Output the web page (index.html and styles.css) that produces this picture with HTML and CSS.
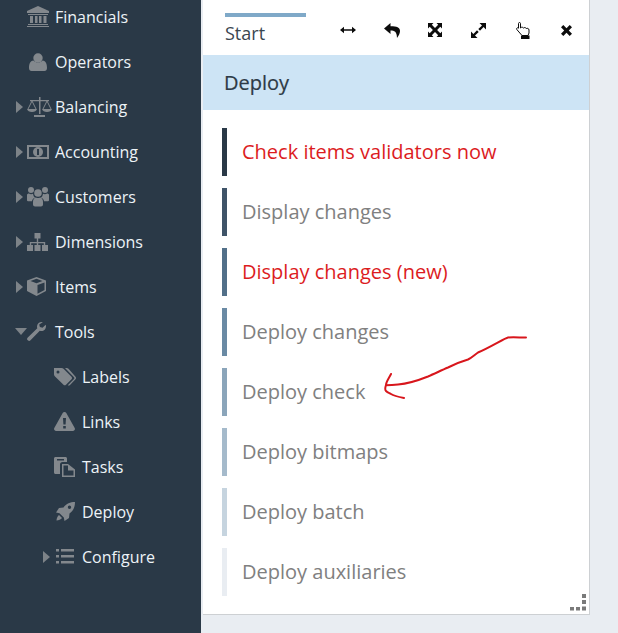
FILE: index.html
```html
<!DOCTYPE html>
<html lang="en">
<head>
<meta charset="utf-8">
<title>Deploy</title>
<link rel="stylesheet" href="styles.css">
</head>
<body>
<div class="app">
  <nav class="sidebar">
    <div class="row"><span class="caret"></span><span class="icon"><svg width="22" height="21" viewBox="0 0 22 21"><path d="M11 0 22 5v2H0V5zM1 8h20v1H1zM3 10h3v7H3zM8 10h2.500v7H8zM12 10h2.500v7H12zM16.500 10h3v7h-3zM1 18h20v1H1zM0 20h22v1H0z"/></svg></span><span class="label">Financials</span></div>
    <div class="row"><span class="caret"></span><span class="icon"><svg class="shift" width="18" height="18" viewBox="0 0 18 18"><circle cx="9" cy="5" r="4.700"/><path d="M0 15c0-4 1-7 4.500-7.500C6 9 7.500 9.500 9 9.500s3-.5 4.500-2C17 8 18 11 18 15c0 2-1 3-2.500 3h-13C1 18 0 17 0 15z"/></svg></span><span class="label">Operators</span></div>
    <div class="row"><span class="caret right"></span><span class="icon"><svg width="25" height="20" viewBox="0 0 25 20"><path d="M12 0h1.500v17H12zM7 18h11v2H7zM3 3h19v1.300H3z"/><path class="line" d="M5 4 1 12M5 4l4 8M20 4l-4 8M20 4l4 8"/><path d="M0 12h10c-.5 2-2.500 3-5 3s-4.500-1-5-3zM15 12h10c-.5 2-2.500 3-5 3s-4.500-1-5-3z"/></svg></span><span class="label">Balancing</span></div>
    <div class="row"><span class="caret right"></span><span class="icon"><svg width="22" height="14" viewBox="0 0 22 14"><path fill-rule="evenodd" d="M0 0h22v14H0zM2 2v10h18V2z"/><circle cx="11" cy="7" r="5"/><path class="cut" d="M10 4h2v6h-2z"/></svg></span><span class="label">Accounting</span></div>
    <div class="row"><span class="caret right"></span><span class="icon"><svg width="22" height="20" viewBox="0 0 22 20"><circle cx="4" cy="3" r="3"/><circle cx="18" cy="3" r="3"/><circle cx="11" cy="6" r="3.800"/><path d="M0 8c0-1 1-1.500 2-1.500 1 .8 3 .8 4 .2.300 2 1 3 2 4-2 .5-3 2-3 3.500H1c-1 0-1-1-1-1.500zM22 8c0-1-1-1.500-2-1.500-1 .8-3 .8-4 .2-.3 2-1 3-2 4 2 .5 3 2 3 3.500h4c1 0 1-1 1-1.500zM6 15c0-3 1.500-4.500 3-4.500 1 .8 3 .8 4 0 1.500 0 3 1.500 3 4.500v2.500c0 1-1 2-2 2H8c-1 0-2-1-2-2z"/></svg></span><span class="label">Customers</span></div>
    <div class="row"><span class="caret right"></span><span class="icon"><svg width="21" height="18" viewBox="0 0 21 18"><path d="M7.500 0h6v5.500h-6zM9.800 5.500h1.400V9h7v3h-1.400v-1.700h-5.600V12H9.800v-1.700H4.200V12H2.800V9h7z"/><path d="M0 12h6v6H0zM7.500 12h6v6h-6zM15 12h6v6h-6z"/></svg></span><span class="label">Dimensions</span></div>
    <div class="row"><span class="caret right"></span><span class="icon"><svg width="19" height="19" viewBox="0 0 19 19"><path d="M9.500 0 19 3.500V14l-9.500 5L0 14V3.500zM9.500 1.800 3.500 4l6 2.300L15.500 4zM10.500 8v8.800l7-3.700V5.400z"/></svg></span><span class="label">Items</span></div>
    <div class="row"><span class="caret down"></span><span class="icon"><svg width="19" height="19" viewBox="0 0 19 19"><path d="M15 0c-3 0-5 2-5 4.500 0 .6.100 1.200.3 1.700L.8 15.500c-1 1-1 2 0 2.800s1.800.8 2.700 0L12.800 8.800c.5.200 1.100.2 1.700.2 2.500 0 4.500-2 4.500-5l-.3-1.200-3.200 3-2.600-.7-.7-2.600L15.800.3z"/></svg></span><span class="label">Tools</span></div>
    <div class="row sub"><span class="caret"></span><span class="icon"><svg width="22" height="18" viewBox="0 0 22 18"><path d="M0 0h7.500c.8 0 1.500.3 2 .8l8 8c.7.8.7 1.800 0 2.500l-5.500 5.500c-.8.700-1.800.7-2.500 0L1 8.500C.4 8 0 7.200 0 6.500zM4 2.500A1.500 1.500 0 1 0 4 5.500 1.500 1.500 0 0 0 4 2.500z"/><path d="M11 0h1.500c.8 0 1.500.3 2 .8l7 8c.7.8.7 1.800 0 2.500L16 17c-.8.700-1.500.7-2.200.3L20 11c.5-.6.500-1.200 0-1.800z"/></svg></span><span class="label">Labels</span></div>
    <div class="row sub"><span class="caret"></span><span class="icon"><svg width="21" height="19" viewBox="0 0 21 19"><path fill-rule="evenodd" d="M10.500 0c.8 0 1.400.4 1.800 1.100l8.400 15c.7 1.300-.2 2.900-1.800 2.900H2.100C.5 19-.4 17.400.3 16.100l8.400-15C9.100.4 9.700 0 10.500 0zM9 6l.4 6.500h2.200L12 6zM9.200 14v2.500h2.600V14z"/></svg></span><span class="label">Links</span></div>
    <div class="row sub"><span class="caret"></span><span class="icon"><svg width="21" height="20" viewBox="0 0 21 20"><path d="M0 1.500C0 .7.700 0 1.500 0h10c.8 0 1.500.7 1.500 1.500V5H8.500C7 5 6 6 6 7.500V17H1.500C.7 17 0 16.300 0 15.500zM3 2v1.500h7V2z"/><path fill-rule="evenodd" d="M8 7h6l7 5.500V20H8zM9.500 8.500v10H19.500V13.500H14V8.500z"/></svg></span><span class="label">Tasks</span></div>
    <div class="row sub"><span class="caret"></span><span class="icon"><svg class="shift" width="19" height="19" viewBox="0 0 19 19"><path fill-rule="evenodd" d="M19 0c0 5-1.500 8.500-5.500 11.500L13 16l-4.500 3-.7-3.500-4.300-4.300L0 10.500 3 6l4.500-.5C10.500 1.500 14 0 19 0zM13.500 3.500a1.700 1.700 0 1 0 0 3.400 1.700 1.700 0 0 0 0-3.400z"/><path d="M3 13l3 3c-1 1.500-3.500 2.500-5.500 2.500C.5 16.500 1.500 14 3 13z"/></svg></span><span class="label">Deploy</span></div>
    <div class="row sub"><span class="caret right"></span><span class="icon"><svg class="shift" width="18" height="15" viewBox="0 0 18 15"><path d="M0 0h3v2.500H0zM0 6h3v2.500H0zM0 12h3v2.500H0zM5 0h13v2.500H5zM5 6h13v2.500H5zM5 12h13v2.500H5z"/></svg></span><span class="label">Configure</span></div>
  </nav>
  <main class="panel">
    <header class="topbar">
      <div class="tab">Start</div>
      <div class="tools">
        <svg width="16" height="8" viewBox="0 0 16 8"><path d="M0 4 4 .8V3.200h8V.8L16 4l-4 3.200V4.800H4v2.400z"/></svg>
        <svg width="16" height="15" viewBox="0 0 16 15"><path d="M6.500 0 0 5.500 6.500 11V7.500c4 0 6.300 1 6.500 7.500 2-3 3-5 3-7 0-3.500-3-4.800-9.500-4.800z"/></svg>
        <svg width="14" height="14" viewBox="0 0 14 14"><path d="M0 0h5.500L3.800 1.700 7 4.900l3.200-3.200L8.500 0H14v5.500L12.300 3.800 9.100 7l3.200 3.200L14 8.500V14H8.500l1.700-1.700L7 9.100l-3.200 3.200L5.500 14H0V8.500l1.700 1.700L4.900 7 1.700 3.800 0 5.500z"/></svg>
        <svg width="15" height="15" viewBox="0 0 15 15"><path d="M8.500 0H15v6.500L12.600 4 9 7.700 7.300 6 11 2.400zM0 8.500 2.400 11 6 7.300 7.700 9 4 12.600 6.500 15H0z"/></svg>
        <svg width="14" height="17" viewBox="0 0 14 17"><path class="open" d="M2.500 1.500c0-1.300 2-1.300 2 0V6c1-1.300 2.500-.8 3 0 .8-.8 2.300-.5 2.800.5.800-.5 2.700-.2 2.700 1.500v3l-1 2.500H6L.8 7.500c-.8-1.200.8-2.500 1.700-1.300z"/><path d="M5 13.500h8.500V17H5z"/></svg>
        <svg width="11" height="11" viewBox="0 0 11 11"><path d="M2.300 0 5.500 3.200 8.700 0 11 2.300 7.800 5.500 11 8.700 8.700 11 5.500 7.800 2.300 11 0 8.700 3.200 5.500 0 2.300z"/></svg>
      </div>
    </header>
    <h1 class="title">Deploy</h1>
    <ul class="items">
      <li class="item alert s1">Check items validators now</li>
      <li class="item s2">Display changes</li>
      <li class="item alert s3">Display changes (new)</li>
      <li class="item s4">Deploy changes</li>
      <li class="item s5">Deploy check</li>
      <li class="item s6">Deploy bitmaps</li>
      <li class="item s7">Deploy batch</li>
      <li class="item s8">Deploy auxiliaries</li>
    </ul>
    <svg class="grip" width="16" height="17" viewBox="0 0 16 17"><path d="M12 0h4v4h-4zM12 6h4v4h-4zM12 12.500h4v4h-4zM6 13h4v3.500H6zM0 13h4v3.500H0z"/></svg>
  </main>
  <svg class="scribble" width="150" height="70" viewBox="380 332 150 70"><path d="M526 337.500c-6 0-14-.5-18 0-3 .5-18 10-30 15-3 2-6 5-10 7-7 2-14 5-20 8-7 3-13 6-20 9-5 2-18 7-30 8-4 .3-8 .5-12 .8M391 374c-2 4-5 8-5 11-1 3-1 5 0 6 2 2 4 2 5 3 3 2 8 3 13 4"/></svg>
</div>
</body>
</html>
```

FILE: styles.css
```css
* { box-sizing: border-box; }
html, body { margin: 0; height: 100%; }
body {
  background: #e9edf2;
  font-family: "Open Sans", "Liberation Sans", sans-serif;
  overflow: hidden;
}
.app {
  position: relative;
  display: flex;
  width: 618px;
  height: 633px;
  align-items: flex-start;
}
.sidebar {
  width: 201px;
  height: 633px;
  flex: none;
  background: #2a3947;
  overflow: hidden;
}
.row {
  display: flex;
  align-items: center;
  height: 45px;
  padding-left: 15px;
  color: #edf3f7;
  font-size: 16px;
}
.row:first-child { margin-top: -6px; }
.row.sub { padding-left: 42px; }
.caret {
  width: 12px;
  flex: none;
  height: 12px;
  display: flex;
  align-items: center;
}
.caret.right::before {
  content: "";
  margin-left: 1px;
  border-left: 7px solid #7d8388;
  border-top: 6px solid transparent;
  border-bottom: 6px solid transparent;
}
.caret.down::before {
  content: "";
  border-top: 7px solid #7d8388;
  border-left: 6px solid transparent;
  border-right: 6px solid transparent;
}
.icon {
  width: 28px;
  flex: none;
  display: flex;
  align-items: center;
}
.icon svg { fill: #83888d; display: block; }
.icon .shift { margin-left: 2px; }
.icon .cut { fill: #2a3947; }
.line { fill: none; stroke: #83888d; stroke-width: 1; }
.label { line-height: 20px; }
.panel {
  position: relative;
  width: 387px;
  height: 615px;
  margin-left: 2px;
  flex: none;
  background: #fff;
  border-right: 1px solid #cdd0d3;
  border-bottom: 1px solid #cdd0d3;
}
.topbar {
  display: flex;
  height: 55px;
  padding: 13px 0 0 22px;
}
.tab {
  width: 81px;
  height: 42px;
  padding-top: 4px;
  border-top: 4px solid #7fa9c8;
  color: #3a4650;
  font-size: 18px;
  line-height: 24px;
}
.tools {
  display: grid;
  grid-template-columns: repeat(6, 43.700px);
  justify-items: center;
  align-items: center;
  height: 34px;
  margin-left: 20px;
}
.tools svg { display: block; fill: #0c0c0c; }
.open { fill: #fff; stroke: #0c0c0c; stroke-width: 1; }
.title {
  margin: 0;
  height: 55px;
  padding: 0 21px;
  background: #cde4f5;
  color: #2d3a46;
  font-size: 20px;
  font-weight: 400;
  line-height: 55px;
  -webkit-text-stroke: 0.2px #2d3a46;
}
.items {
  list-style: none;
  margin: 0;
  padding: 18px 0 0 19px;
}
.item {
  height: 48px;
  margin-bottom: 12px;
  padding-left: 15px;
  border-left: 5px solid #000;
  color: #808080;
  font-size: 20px;
  line-height: 48px;
}
.item.alert { color: #dc1c1e; }
.s1 { border-left-color: #2a3947; }
.s2 { border-left-color: #3f5468; }
.s3 { border-left-color: #527089; }
.s4 { border-left-color: #6a8aa4; }
.s5 { border-left-color: #8ba5ba; }
.s6 { border-left-color: #a5bacb; }
.s7 { border-left-color: #c6d4df; }
.s8 { border-left-color: #e9edf2; }
.grip {
  position: absolute;
  right: 3px;
  bottom: 3px;
  fill: #7a7a7a;
}
.scribble {
  position: absolute;
  left: 380px;
  top: 332px;
  fill: none;
  stroke: #d8161c;
  stroke-width: 2;
  stroke-linecap: round;
  stroke-linejoin: round;
}
```
